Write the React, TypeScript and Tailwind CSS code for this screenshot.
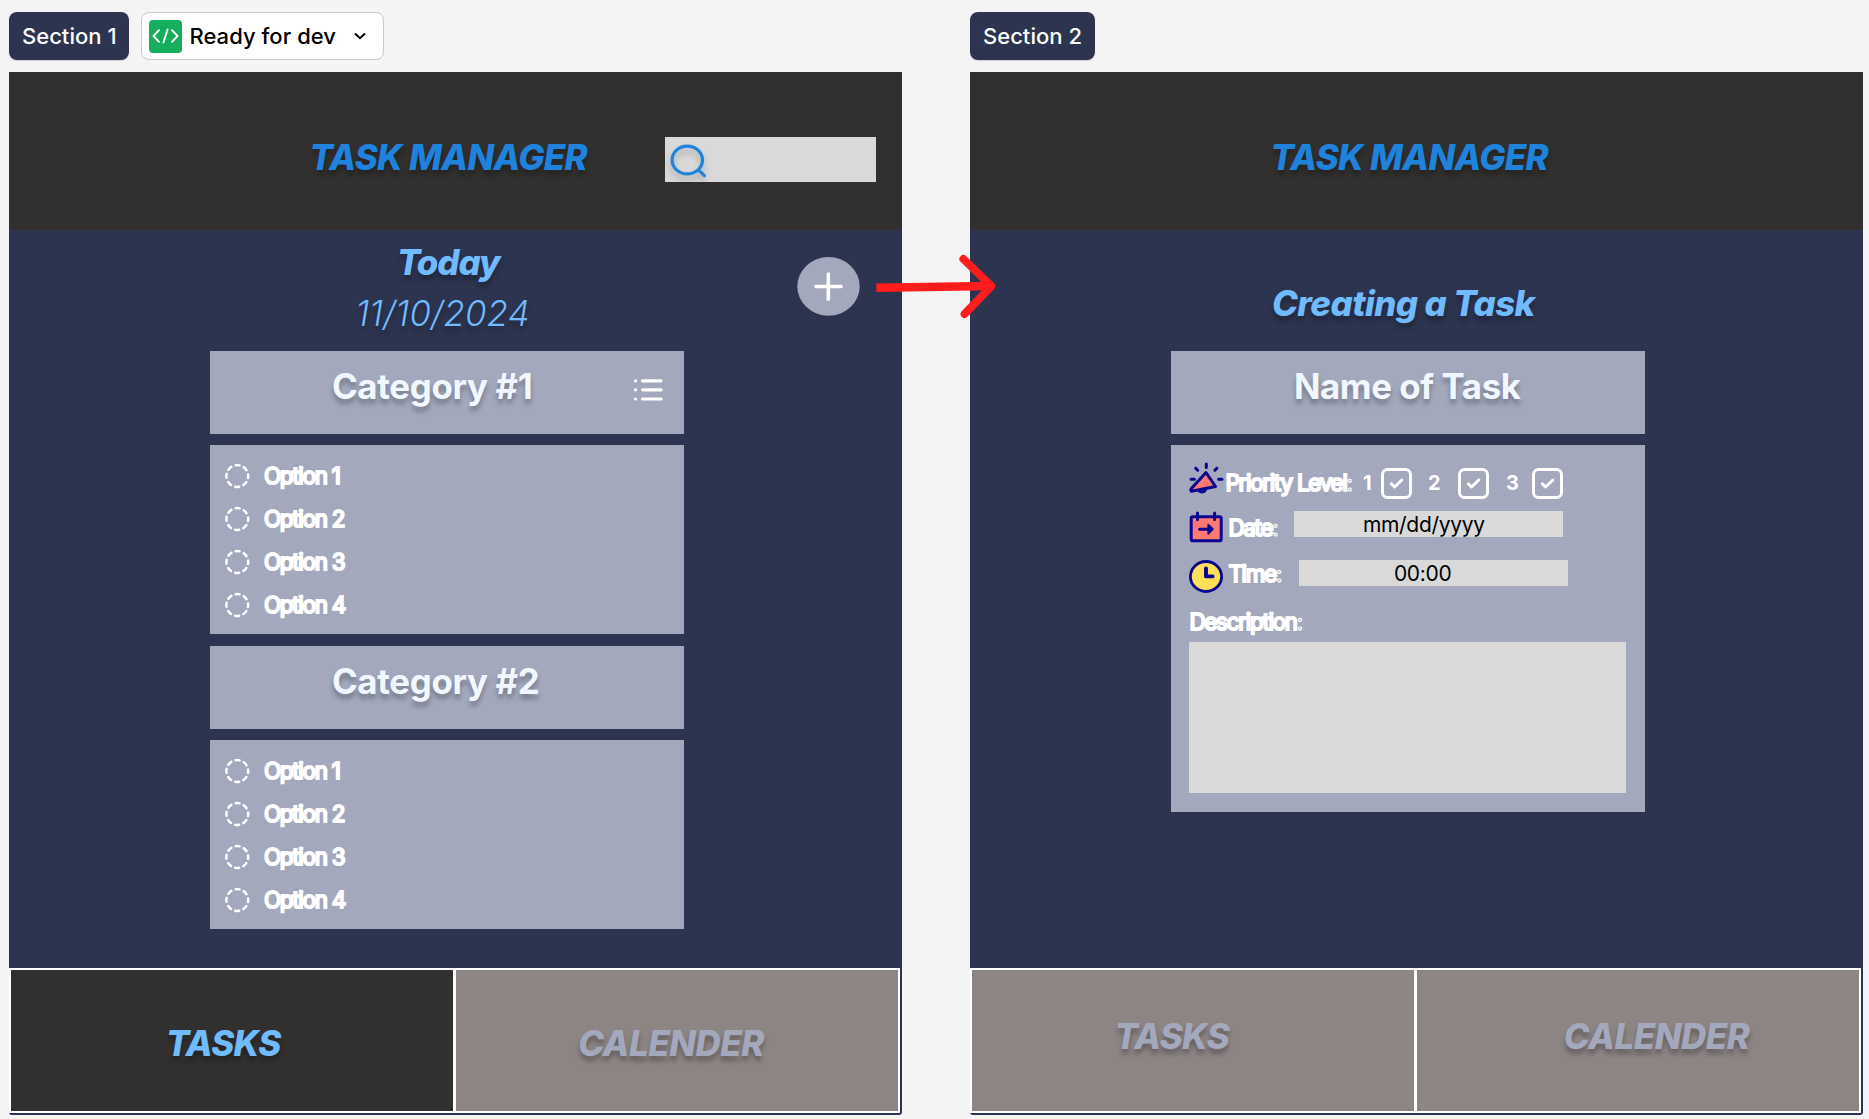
import React from "react";

const SHADOW = "[text-shadow:0_5px_5px_rgba(0,0,0,0.28)]";
const HEADING = `text-[34.8px] leading-[42px] whitespace-nowrap ${SHADOW}`;

function OptionCircle() {
  return (
    <svg className="size-[26px] shrink-0" viewBox="0 0 26 26" fill="none" stroke="#fff" strokeWidth="2.5" strokeLinecap="round">
      <circle cx="13.3" cy="13" r="10.9" strokeDasharray="4.1 4.461" strokeDashoffset="2.05" />
    </svg>
  );
}

function Outlined({ children, colon = false, className = "" }: { children: React.ReactNode; colon?: boolean; className?: string }) {
  return (
    <span className={`text-[22.4px] leading-[28px] font-normal tracking-[-1.25px] whitespace-nowrap text-white [-webkit-text-stroke:2px_#fff] ${className}`}>
      {children}
      {colon && <span className="text-transparent [-webkit-text-stroke:1.1px_#fff]">:</span>}
    </span>
  );
}

function ListIcon() {
  return (
    <svg className="mt-[27px] mr-[20px] ml-auto h-[24px] w-[31px] shrink-0" viewBox="0 0 31 24" stroke="#fff" strokeWidth="3.2" strokeLinecap="round">
      <path d="M2.5 2.8h.01M2.5 11.8h.01M2.5 21h.01M9.5 2.8h18.7M9.5 11.8h18.7M9.5 21h18.7" />
    </svg>
  );
}

function Category({ title, list = false }: { title: string; list?: boolean }) {
  return (
    <div>
      <div className="flex h-[82.5px] bg-[#a3a8bc] pl-[122px]">
        <h3 className={`mt-[14.4px] font-bold tracking-[-0.3px] text-[#f0f7ff] ${HEADING}`}>{title}</h3>
        {list && <ListIcon />}
      </div>
      <ul className="mt-[11.5px] flex h-[189px] flex-col gap-[14.9px] bg-[#a3a8bc] pt-[17px] pl-[14px]">
        {[1, 2, 3, 4].map((n) => (
          <li key={n} className="flex h-[28px] items-center">
            <OptionCircle />
            <Outlined className="ml-[14px]">Option {n}</Outlined>
          </li>
        ))}
      </ul>
    </div>
  );
}

function Tabs({ active = false }: { active?: boolean }) {
  return (
    <nav className="mr-[2px] mb-[2px] grid h-[145.5px] grid-cols-2 gap-[3px] border-2 border-white bg-white">
      <div className={active ? "bg-[#31302e] pt-[52.5px] pl-[154.5px] text-[#70bbff]" : "bg-[#8d8484] pt-[45.5px] pl-[142px] text-[#a3a8bc]"}>
        <span className={`block font-extrabold italic tracking-[-0.6px] ${HEADING}`}>TASKS</span>
      </div>
      <div className={`bg-[#8d8484] text-[#a3a8bc] ${active ? "pt-[52.5px] pl-[122px]" : "pt-[45.5px] pl-[146.5px]"}`}>
        <span className={`block font-extrabold italic tracking-[-0.4px] ${HEADING}`}>CALENDER</span>
      </div>
    </nav>
  );
}

function CheckBox({ className = "" }: { className?: string }) {
  return (
    <svg className={`size-[31px] shrink-0 ${className}`} viewBox="0 0 31 31" fill="none" stroke="#fff" strokeWidth="3" strokeLinecap="round" strokeLinejoin="round">
      <rect x="1.5" y="1.5" width="28" height="28" rx="5" />
      <path d="M10.4 15.9l3.2 3.1 7.2-7" />
    </svg>
  );
}

function Megaphone() {
  return (
    <svg className="h-[34px] w-[35px] shrink-0" viewBox="0 0 35 34" fill="none" stroke="#0a0590" strokeWidth="3" strokeLinecap="round" strokeLinejoin="round">
      <path d="M17.3 2v3.6M6.7 6.2l2 2M27.9 6.2l-2 2M2 17.3h3.4M29.6 17.3h3.4" />
      <path d="M9.5 28.2a4 4 0 0 0 7.2-1.4" />
      <path d="M17 10.5L26.5 24.5 2.5 29.3Q1.3 28.2 2.2 26.8z" fill="#ff7872" />
    </svg>
  );
}

function CalendarIcon() {
  return (
    <svg className="h-[32px] w-[35px] shrink-0" viewBox="0 0 35 32" fill="none" stroke="#0a0590" strokeWidth="3" strokeLinecap="round" strokeLinejoin="round">
      <rect x="2.2" y="5.8" width="30" height="24" rx="1.6" fill="#ff7872" />
      <path d="M8.5 2v6.5M25.6 2v6.5M10.5 18.2h12" />
      <path d="M19.3 13.6l4.6 4.6-4.6 4.6z" fill="#0a0590" strokeWidth="1.8" />
    </svg>
  );
}

function ClockIcon() {
  return (
    <svg className="h-[33px] w-[35px] shrink-0" viewBox="0 0 35 33" fill="none" stroke="#0a0590" strokeLinecap="round" strokeLinejoin="round">
      <ellipse cx="17" cy="16.5" rx="15.6" ry="15" fill="#ffdf57" strokeWidth="2.8" />
      <path d="M17 8.5v7.9h6.6" strokeWidth="3.9" />
    </svg>
  );
}

function SearchBox() {
  return (
    <div className="mt-[65px] h-[44.5px] w-[211px] bg-[#d9d9d9]">
      <svg className="mt-[6px] ml-[4px] h-[38px] w-[42px] overflow-visible [filter:drop-shadow(0_5px_3px_rgba(0,0,0,0.22))]" viewBox="0 0 42 38" fill="none" stroke="#1f82dc" strokeWidth="3.2" strokeLinecap="round">
        <ellipse cx="18.3" cy="17" rx="15.2" ry="13.9" />
        <path d="M30.3 27.7l5 5" />
      </svg>
    </div>
  );
}

function AddButton() {
  return (
    <svg className="h-[59px] w-[63px] shrink-0" viewBox="0 0 63 59">
      <ellipse cx="31.5" cy="29.4" rx="31.2" ry="29.3" fill="#a3a8bc" />
      <path d="M31.3 17v25.2M19 29.5h25" stroke="#fff" strokeWidth="3.6" strokeLinecap="round" />
    </svg>
  );
}

function FlowArrow() {
  return (
    <svg className="absolute top-[250px] left-[870px] h-[74px] w-[132px]" viewBox="870 250 132 74" fill="none" stroke="#ff1c1c" strokeLinejoin="round">
      <path d="M876.3 287.7L991 286.1" strokeWidth="8.5" />
      <path d="M963.4 259L991.3 286.2 964.6 314" strokeWidth="8" strokeLinecap="round" />
    </svg>
  );
}

function Title() {
  return <h1 className={`font-extrabold italic tracking-[-0.6px] text-[#1f82dc] ${HEADING}`}>TASK MANAGER</h1>;
}

function SectionLabel({ children }: { children: React.ReactNode }) {
  return (
    <div className="flex h-[48px] items-center rounded-[8px] bg-[#2d344f] px-[12.5px] text-[22px] font-medium tracking-[0.05px] whitespace-nowrap text-white shadow-[0_1px_1px_rgba(0,0,0,0.15)]">
      {children}
    </div>
  );
}

export default function App() {
  return (
    <div className="relative flex h-[1119px] w-[1869px] gap-[68.5px] overflow-hidden bg-[#f4f4f4] pt-[12px] pl-[9.4px] font-['Inter',sans-serif]">
      <section className="w-[892.5px] shrink-0">
        <div className="flex gap-[12px]">
          <div className="w-[120px]">
            <SectionLabel>Section 1</SectionLabel>
          </div>
          <div className="flex h-[48px] w-[243px] items-center rounded-[8px] border border-[#cccccc] bg-white pl-[7px]">
            <span className="flex size-[33px] items-center justify-center rounded-[4px] bg-[#14ae5c]">
              <svg className="h-[18px] w-[29px]" viewBox="0 0 29 18" fill="none" stroke="#fff" strokeWidth="1.9" strokeLinecap="round" strokeLinejoin="round">
                <path d="M8 3.2L2.5 9 8 14.8M16.6 2.5l-4.2 13M21 3.2L26.5 9 21 14.8" />
              </svg>
            </span>
            <span className="ml-[7px] text-[22px] font-medium tracking-[0.05px] whitespace-nowrap text-black">Ready for dev</span>
            <svg className="ml-[17px] h-[10px] w-[14px]" viewBox="0 0 14 10" fill="none" stroke="#000" strokeWidth="2">
              <path d="M2 2.5l5 4.7 5-4.7" />
            </svg>
          </div>
        </div>
        <div className="mt-[12px] flex h-[1043px] flex-col rounded-b-[3px] bg-[#2d344f]">
          <header className="flex h-[157.5px] shrink-0 bg-[#31302e] pl-[300px]">
            <div className="mt-[64px] w-[356px]">
              <Title />
            </div>
            <SearchBox />
          </header>
          <main className="flex-1">
            <div className="flex h-[121.5px]">
              <div className="w-[787.5px] pt-[11px]">
                <h2 className={`ml-[387.5px] font-extrabold italic tracking-[-1px] text-[#70bbff] ${HEADING}`}>Today</h2>
                <p className={`mt-[9px] ml-[346px] font-light italic tracking-[0.2px] text-[#70bbff] ${HEADING}`}>11/10/2024</p>
              </div>
              <div className="pt-[27px]">
                <AddButton />
              </div>
            </div>
            <div className="ml-[200.5px] flex w-[474.5px] flex-col gap-[12px]">
              <Category title="Category #1" list />
              <Category title="Category #2" />
            </div>
          </main>
          <Tabs active />
        </div>
      </section>

      <section className="w-[892.5px] shrink-0">
        <div className="flex">
          <SectionLabel>Section 2</SectionLabel>
        </div>
        <div className="mt-[12px] flex h-[1043px] flex-col rounded-b-[3px] bg-[#2d344f]">
          <header className="h-[157.5px] shrink-0 bg-[#31302e] pt-[64px] pl-[300px]">
            <Title />
          </header>
          <main className="flex-1 pt-[52px]">
            <h2 className={`ml-[301.5px] font-extrabold italic tracking-[-0.55px] text-[#70bbff] ${HEADING}`}>Creating a Task</h2>
            <div className="mt-[27.5px] ml-[200.5px] w-[474.5px]">
              <div className="h-[82.5px] bg-[#a3a8bc] pt-[14.4px] pl-[123px]">
                <h3 className={`font-bold tracking-[-0.4px] text-[#f0f7ff] ${HEADING}`}>Name of Task</h3>
              </div>
              <div className="mt-[11.5px] h-[367px] bg-[#a3a8bc] pt-[17px] pl-[18.5px]">
                <div className="flex h-[49px]">
                  <Megaphone />
                  <Outlined colon className="mt-[7px] ml-[1px] w-[137.5px]">Priority Level</Outlined>
                  <span className="mt-[7px] w-[18px] text-[20px] leading-[28px] font-bold text-white">1</span>
                  <CheckBox className="mt-[6px]" />
                  <span className="mt-[7px] ml-[16px] w-[30px] text-[20px] leading-[28px] font-bold text-white">2</span>
                  <CheckBox className="mt-[6px]" />
                  <span className="mt-[7px] ml-[17px] w-[26px] text-[20px] leading-[28px] font-bold text-white">3</span>
                  <CheckBox className="mt-[6px]" />
                </div>
                <div className="flex h-[49px]">
                  <CalendarIcon />
                  <Outlined colon className="mt-[3px] ml-[4px] w-[65.5px]">Date</Outlined>
                  <div className="h-[26px] w-[269px] bg-[#d9d9d9] pl-[69px] text-[21px] leading-[27px] tracking-[-0.3px] whitespace-nowrap text-black">mm/dd/yyyy</div>
                </div>
                <div className="flex h-[47px]">
                  <ClockIcon />
                  <Outlined colon className="ml-[4px] w-[70.5px]">Time</Outlined>
                  <div className="h-[26px] w-[269px] bg-[#d9d9d9] pl-[95px] text-[21px] leading-[28px] tracking-[-0.3px] text-black">00:00</div>
                </div>
                <div className="flex h-[35px] pt-[1px]">
                  <Outlined colon>Description</Outlined>
                </div>
                <div className="h-[151px] w-[437px] bg-[#d9d9d9]" />
              </div>
            </div>
          </main>
          <Tabs />
        </div>
      </section>
      <FlowArrow />
    </div>
  );
}
